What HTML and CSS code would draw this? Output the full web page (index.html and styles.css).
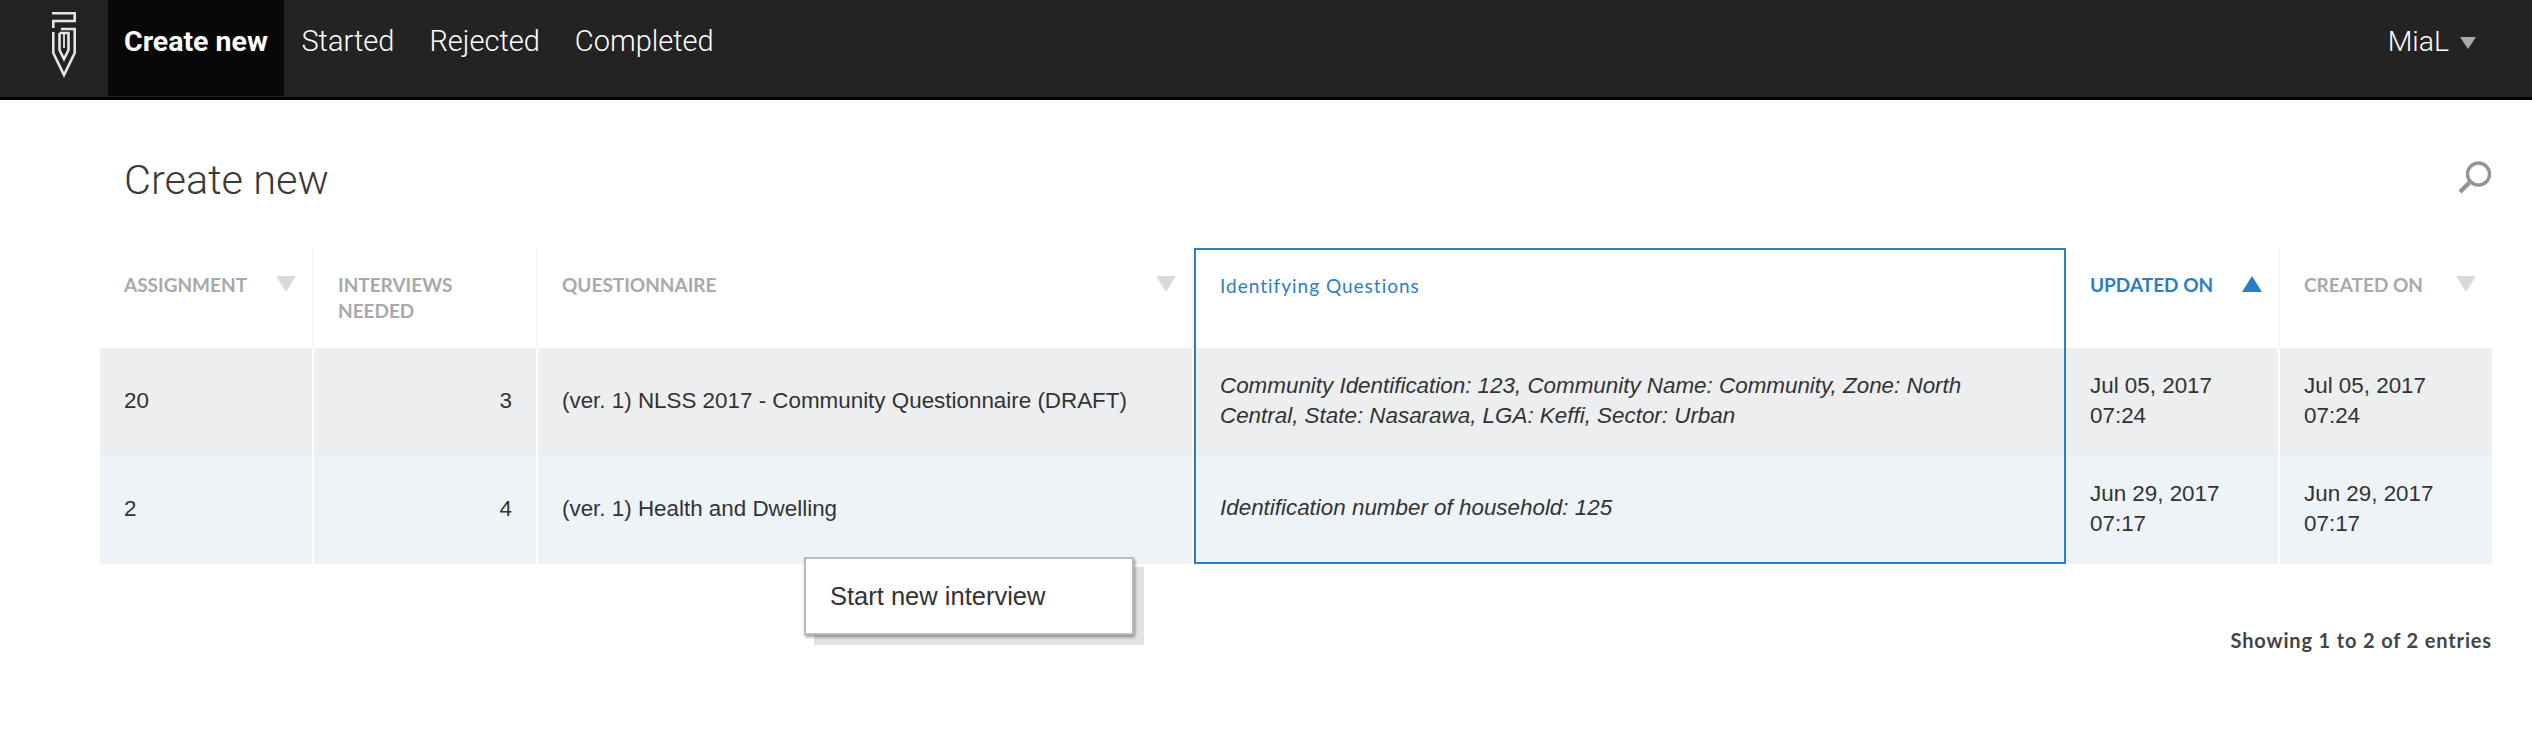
FILE: index.html
```html
<!DOCTYPE html>
<html lang="en">
<head>
    <meta charset="UTF-8">
    <title>Create new</title>
    <link rel="stylesheet" href="styles.css">
</head>
<body>
    <header class="topbar">
        <a class="logo" href="#">
            <svg width="24" height="66" viewBox="0 0 24 66" fill="none" stroke="#e6e6e6" stroke-width="2.6">
                <path d="M0 1.3H22.7V9H1.3V16"/>
                <path d="M1.3 20V41L12 63L22.7 41V17H9"/>
                <path d="M7.5 21H16.5V38L12 47L7.5 38V21"/>
                <path d="M12 21V36" stroke-width="1.8"/>
            </svg>
        </a>
        <nav class="tabs">
            <a class="tab active" href="#">Create new</a>
            <a class="tab" href="#">Started</a>
            <a class="tab" href="#">Rejected</a>
            <a class="tab" href="#">Completed</a>
        </nav>
        <div class="user">MiaL <span class="user-caret"></span></div>
    </header>
    <main class="content">
        <div class="title-row">
            <h1>Create new</h1>
            <svg class="search" width="34" height="34" viewBox="0 0 34 34" fill="none" stroke="#8f979d">
                <circle cx="20.5" cy="14" r="11" stroke-width="3.4"/>
                <path d="M12 22L2 32" stroke-width="4.5"/>
            </svg>
        </div>
        <div class="table-wrap">
            <table class="grid">
                <thead>
                    <tr>
                        <th class="col-assignment"><div class="th-inner">Assignment <span class="arrow"></span></div></th>
                        <th class="col-needed"><div class="th-inner">Interviews<br>needed</div></th>
                        <th class="col-questionnaire"><div class="th-inner">Questionnaire <span class="arrow"></span></div></th>
                        <th class="col-identifying"><div class="th-inner">Identifying Questions</div></th>
                        <th class="col-updated sorted"><div class="th-inner">Updated on <span class="arrow up"></span></div></th>
                        <th class="col-created"><div class="th-inner">Created on <span class="arrow"></span></div></th>
                    </tr>
                </thead>
                <tbody>
                    <tr class="row-selected">
                        <td>20</td>
                        <td class="num">3</td>
                        <td>(ver. 1) NLSS 2017 - Community Questionnaire (DRAFT)</td>
                        <td class="col-identifying">Community Identification: 123, Community Name: Community, Zone: North Central, State: Nasarawa, LGA: Keffi, Sector: Urban</td>
                        <td class="col-updated">Jul 05, 2017<br>07:24</td>
                        <td>Jul 05, 2017<br>07:24</td>
                    </tr>
                    <tr class="row-hover">
                        <td>2</td>
                        <td class="num">4</td>
                        <td>(ver. 1) Health and Dwelling</td>
                        <td class="col-identifying">Identification number of household: 125</td>
                        <td class="col-updated">Jun 29, 2017<br>07:17</td>
                        <td>Jun 29, 2017<br>07:17</td>
                    </tr>
                </tbody>
            </table>
            <div class="context-menu">Start new interview</div>
            <p class="entries">Showing 1 to 2 of 2 entries</p>
        </div>
    </main>
</body>
</html>
```

FILE: styles.css
```css
body {
    margin: 0;
    background: #fff;
    color: #333;
    font-family: 'Liberation Sans', Arial, sans-serif;
}
.topbar {
    display: flex;
    align-items: flex-start;
    height: 96px;
    padding-bottom: 1px;
    background: #232323;
    border-bottom: 3px solid #000;
}
.logo {
    display: block;
    width: 108px;
    padding: 12px 0 0 52px;
    box-sizing: border-box;
}
.tabs {
    display: flex;
}
.tab {
    height: 96px;
    padding: 0 17.5px;
    font-family: Roboto, sans-serif;
    font-size: 29px;
    font-weight: 300;
    line-height: 83px;
    color: #fff;
    text-decoration: none;
}
.tab.active {
    padding: 0 16px;
    background: #080808;
    font-size: 28.5px;
    font-weight: 700;
}
.user {
    margin-left: auto;
    padding-right: 56px;
    font-family: Roboto, sans-serif;
    font-size: 28.5px;
    font-weight: 300;
    line-height: 83px;
    color: #fff;
}
.user-caret {
    display: inline-block;
    margin-left: 4px;
    vertical-align: middle;
    border-top: 12px solid #a9a9a9;
    border-left: 8px solid transparent;
    border-right: 8px solid transparent;
}
.content {
    padding: 0 40px 0 100px;
}
.title-row {
    display: flex;
    justify-content: space-between;
    align-items: flex-start;
    height: 148px;
}
h1 {
    margin: 0;
    padding: 52px 0 0 24px;
    font-family: Roboto, sans-serif;
    font-size: 41.5px;
    font-weight: 300;
    line-height: 56px;
    color: #3a3a3a;
}
.search {
    margin-top: 60px;
}
.table-wrap {
    position: relative;
}
.grid {
    width: 2392px;
    table-layout: fixed;
    border-collapse: separate;
    border-spacing: 0;
}
.grid th {
    height: 100px;
    padding: 24px 16px 0 24px;
    box-sizing: border-box;
    vertical-align: top;
    text-align: left;
    font-family: Lato, sans-serif;
    font-size: 19px;
    font-weight: 700;
    line-height: 26px;
    text-transform: uppercase;
    color: #a7a9ab;
    border-right: 2px solid #f6f6f6;
}
.th-inner {
    display: flex;
    justify-content: space-between;
    align-items: flex-start;
}
.grid td {
    height: 108px;
    padding: 0 24px 2px;
    box-sizing: border-box;
    font-size: 22.4px;
    line-height: 30px;
    border-right: 2px solid #fff;
}
.col-assignment { width: 214px; }
.col-needed { width: 224px; }
.col-questionnaire { width: 656px; }
.col-identifying { width: 872px; }
.col-updated { width: 214px; }
.col-created { width: 212px; }
.grid td.num {
    text-align: right;
}
.grid th.col-identifying,
.grid td.col-identifying {
    border-left: 2px solid #2d7dc4;
    border-right: 2px solid #2d7dc4;
    font-style: italic;
}
.grid th.col-identifying {
    border-top: 2px solid #2d7dc4;
    padding-top: 23px;
    font-style: normal;
    font-weight: 400;
    letter-spacing: 1px;
    text-transform: none;
    color: #2d7dc4;
}
.row-hover td.col-identifying {
    border-bottom: 2px solid #2d7dc4;
}
.grid th.sorted {
    color: #2d7dc4;
}
.grid th:last-child,
.grid td:last-child {
    border-right: 0;
}
.row-selected td {
    background: #edeef0;
}
.row-hover td {
    background: #eef3f7;
}
.arrow {
    flex: none;
    margin-top: 4px;
    border-top: 16px solid #d8dadc;
    border-left: 10px solid transparent;
    border-right: 10px solid transparent;
}
.arrow.up {
    border-top: 0;
    border-bottom: 16px solid #2d7dc4;
}
.context-menu {
    position: absolute;
    left: 704px;
    top: 309px;
    width: 330px;
    height: 78px;
    padding-left: 24px;
    box-sizing: border-box;
    background: #fff;
    border: 2px solid #bbb;
    box-shadow: 1px 2px 3px rgba(0, 0, 0, 0.4), 10px 10px 0 #e2e2e2;
    font-size: 25.5px;
    line-height: 74px;
}
.entries {
    margin: 0;
    padding-top: 64px;
    text-align: right;
    font-family: Lato, sans-serif;
    font-size: 20px;
    font-weight: 700;
    letter-spacing: 0.85px;
    color: #444;
}
```
